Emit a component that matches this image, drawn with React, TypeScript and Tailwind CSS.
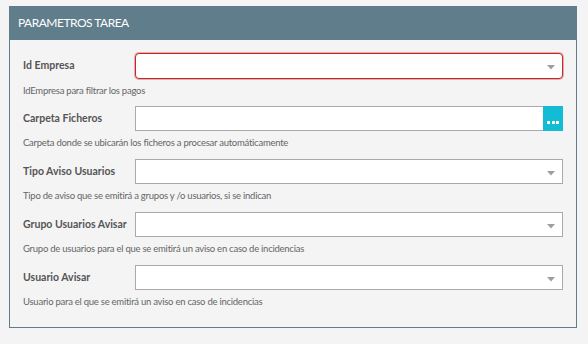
import React from "react";

type Field = {
  label: string;
  help: string;
  kind: "select" | "folder";
  error?: boolean;
};

const fields: Field[] = [
  { label: "Id Empresa", help: "IdEmpresa para filtrar los pagos", kind: "select", error: true },
  {
    label: "Carpeta Ficheros",
    help: "Carpeta donde se ubicarán los ficheros a procesar automáticamente",
    kind: "folder",
  },
  {
    label: "Tipo Aviso Usuarios",
    help: "Tipo de aviso que se emitirá a grupos y /o usuarios, si se indican",
    kind: "select",
  },
  {
    label: "Grupo Usuarios Avisar",
    help: "Grupo de usuarios para el que se emitirá un aviso en caso de incidencias",
    kind: "select",
  },
  {
    label: "Usuario Avisar",
    help: "Usuario para el que se emitirá un aviso en caso de incidencias",
    kind: "select",
  },
];

const Caret = () => (
  <svg width="8" height="5" viewBox="0 0 8 5" className="absolute right-[7px] top-[11px]">
    <path d="M0 0h8L4 4.5z" fill="#9e9e9e" />
  </svg>
);

const FieldRow = ({ field }: { field: Field }) => {
  return (
    <div className={field.error ? "mb-[8px]" : "mb-[9px]"}>
      <div className="flex items-center">
        <div className="w-[112px] text-[10.5px] font-bold text-[#555]">{field.label}</div>
        {field.kind === "select" ? (
          <div
            className={
              field.error
                ? "relative h-[26px] flex-1 rounded-[4px] border border-[#c62828] bg-white shadow-[0_0_0_1px_rgba(198,40,40,0.35)]"
                : "relative h-[25px] flex-1 border border-[#aaaaaa] bg-white"
            }
          >
            <Caret />
          </div>
        ) : (
          <div className="flex h-[25px] flex-1">
            <div className="flex-1 border border-r-0 border-[#aaaaaa] bg-white" />
            <button className="flex w-[20px] items-start justify-center gap-[1.5px] bg-[#12bcd4] pt-[15px]">
              <span className="h-[3px] w-[3px] bg-white" />
              <span className="h-[3px] w-[3px] bg-white" />
              <span className="h-[3px] w-[3px] bg-white" />
            </button>
          </div>
        )}
      </div>
      <div className="mt-[5px] text-[9.5px] leading-[14px] tracking-[-0.25px] text-[#666]">{field.help}</div>
    </div>
  );
};

export default function App() {
  return (
    <div
      className="h-[344px] w-[588px] bg-[#f4f4f4] pl-[9px] pt-[6px]"
      style={{ fontFamily: "Lato, 'Liberation Sans', sans-serif" }}
    >
      <div className="w-[568px]">
        <div className="flex h-[34px] items-center bg-[#607d8b] pl-[9px] text-[12px] tracking-[-0.5px] text-white">
          PARAMETROS TAREA
        </div>
        <div className="border border-t-0 border-[#607d8b] bg-[#f4f4f4] px-[13px] pb-[9px] pt-[13px]">
          {fields.map((f) => (
            <FieldRow key={f.label} field={f} />
          ))}
        </div>
      </div>
    </div>
  );
}
